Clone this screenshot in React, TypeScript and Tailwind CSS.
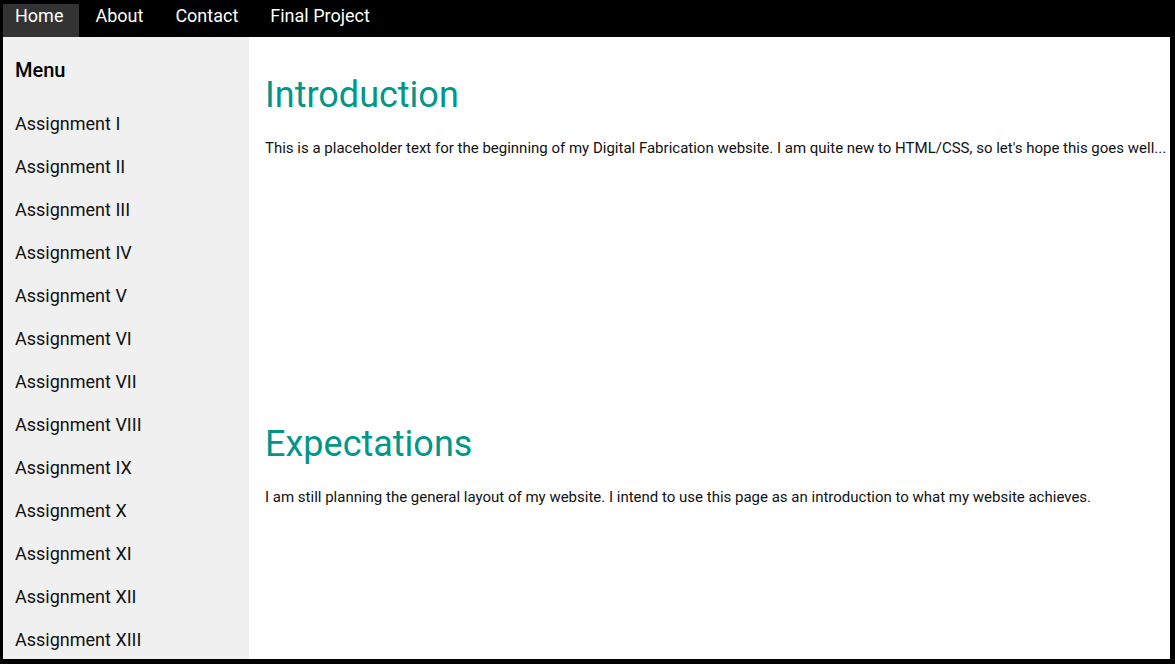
import React from "react";

const NAV = ["Home", "About", "Contact", "Final Project"];

const ASSIGNMENTS = [
  "I", "II", "III", "IV", "V", "VI", "VII", "VIII", "IX", "X", "XI", "XII", "XIII",
];

export default function App() {
  return (
    <div className="flex h-[664px] w-full flex-col overflow-hidden bg-black pb-[5px] pl-[3px] pr-[5px] pt-[4px] font-['Roboto',sans-serif]">
      {/* top nav */}
      <nav className="flex h-[33px] shrink-0 items-stretch bg-black">
        {NAV.map((item, i) => (
          <a
            key={item}
            href="#"
            className={
              i === 0
                ? "block h-full bg-[#333333] pl-[12px] pr-[16px] text-[18px] leading-[24px] text-white"
                : "block h-full px-[16px] text-[18px] leading-[24px] text-white"
            }
          >
            {item}
          </a>
        ))}
      </nav>

      <div className="flex min-h-0 flex-1">
        {/* sidebar */}
        <aside className="w-[246px] shrink-0 overflow-hidden bg-[#f0f0f0] px-[12px] pt-[21px]">
          <h3 className="text-[20px] font-medium leading-[24px] text-black">Menu</h3>
          <ul className="mt-[20px]">
            {ASSIGNMENTS.map((n) => (
              <li key={n} className="flex h-[43px] items-center text-[18px] text-[#111]">
                Assignment {n}
              </li>
            ))}
          </ul>
        </aside>

        {/* main content */}
        <main className="flex-1 overflow-hidden bg-white pl-[16px] pt-[35px] text-[#111]">
          <section className="h-[349px]">
            <h1 className="text-[36px] leading-[46px] text-[#009688]">Introduction</h1>
            <p className="mt-[19px] whitespace-nowrap text-[15px] leading-[22px]">
              This is a placeholder text for the beginning of my Digital Fabrication website. I am quite new to HTML/CSS, so let's hope this goes well...
            </p>
          </section>
          <section>
            <h1 className="text-[36px] leading-[46px] text-[#009688]">Expectations</h1>
            <p className="mt-[19px] text-[15px] leading-[22px]">
              I am still planning the general layout of my website. I intend to use this page as an introduction to what my website achieves.
            </p>
          </section>
        </main>
      </div>
    </div>
  );
}
